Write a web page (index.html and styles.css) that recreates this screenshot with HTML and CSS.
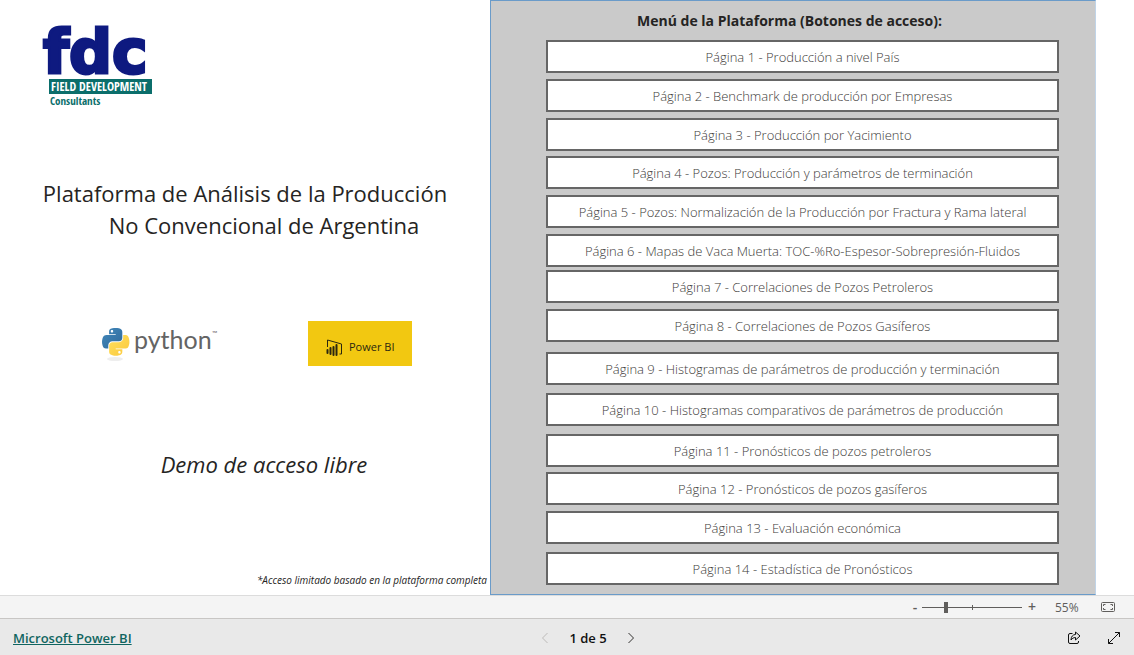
FILE: index.html
```html
<!DOCTYPE html>
<html lang="es">
<head>
<meta charset="utf-8">
<title>Plataforma de Análisis de la Producción No Convencional de Argentina</title>
<link rel="stylesheet" href="styles.css">
</head>
<body>
<main class="report">
  <section class="cover">
    <svg class="logo-fdc" viewBox="0 0 120 84" role="img" aria-label="fdc Field Development Consultants">
      <text class="fdc-name" x="3" y="48">fdc</text>
      <rect x="9" y="54" width="103" height="15" fill="#0b6e6b"/>
      <text class="fdc-field" x="11" y="66">FIELD DEVELOPMENT</text>
      <text class="fdc-cons" x="10" y="80">Consultants</text>
    </svg>
    <h1 class="title"><span class="title-first">Plataforma de Análisis de la Producción</span><span class="title-second">No Convencional de Argentina</span></h1>
    <div class="tools">
      <svg class="logo-python" viewBox="0 0 120 44" role="img" aria-label="python">
        <defs>
          <linearGradient id="blue" x1="0" y1="0" x2="1" y2="1"><stop offset="0" stop-color="#4289bd"/><stop offset="1" stop-color="#30699a"/></linearGradient>
          <linearGradient id="yellow" x1="0" y1="0" x2="1" y2="1"><stop offset="0" stop-color="#ffe060"/><stop offset="1" stop-color="#fbc83a"/></linearGradient>
        </defs>
        <ellipse cx="15" cy="37" rx="8" ry="2" fill="#eeeeee"/>
        <g transform="translate(2 6) scale(.247)">
          <path fill="url(#blue)" d="M54.9 0c-4.6 0-9 .4-12.8 1.1C30.800 3.100 28.700 7.300 28.700 15v10.200h26.800v3.400H18.700c-7.800 0-14.600 4.700-16.700 13.600-2.500 10.200-2.600 16.600 0 27.200 1.900 7.900 6.400 13.600 14.200 13.600h9.200V70.800c0-8.900 7.700-16.700 16.700-16.700h26.700c7.400 0 13.400-6.100 13.400-13.600V15c0-7.300-6.100-12.700-13.400-13.900C64.200.3 59.500 0 54.900 0zM40.400 8.200c2.800 0 5 2.300 5 5.100s-2.200 5.100-5 5.100-5-2.300-5-5.100 2.300-5.100 5-5.100z"/>
          <path fill="url(#yellow)" d="M85.600 28.700v11.900c0 9.200-7.800 17-16.700 17H42.200c-7.300 0-13.400 6.300-13.400 13.600v25.500c0 7.300 6.300 11.500 13.400 13.600 8.500 2.500 16.600 3 26.700 0 6.700-2 13.400-5.900 13.400-13.600V86.500H55.500v-3.400h40.100c7.800 0 10.700-5.400 13.400-13.600 2.800-8.400 2.700-16.500 0-27.200-1.900-7.700-5.600-13.600-13.400-13.600zM70.600 93.300c2.800 0 5 2.300 5 5.100s-2.200 5.100-5 5.100-5-2.300-5-5.100 2.200-5.100 5-5.100z"/>
        </g>
        <text class="python-name" x="34" y="27">python</text>
        <text class="python-tm" x="112" y="14">™</text>
      </svg>
      <div class="powerbi">
        <svg class="powerbi-icon" viewBox="0 0 18 18" aria-hidden="true">
          <path d="M1.500 9V2l14 4v10h-2" fill="none" stroke="#2b2710" stroke-linejoin="round"/>
          <path d="M1.500 12v3M4.500 10v6M7.500 9v8M10.500 7v10" fill="none" stroke="#2b2710" stroke-width="2" stroke-linecap="round"/>
        </svg>
        <span>Power BI</span>
      </div>
    </div>
    <p class="demo">Demo de acceso libre</p>
    <p class="note">*Acceso limitado basado en la plataforma completa</p>
  </section>
  <nav class="menu" aria-labelledby="menu-title">
    <h2 class="menu-title" id="menu-title">Menú de la Plataforma (Botones de acceso):</h2>
    <button class="page-btn">Página 1 - Producción a nivel País</button>
    <button class="page-btn">Página 2 - Benchmark de producción por Empresas</button>
    <button class="page-btn gap-small">Página 3 - Producción por Yacimiento</button>
    <button class="page-btn">Página 4 - Pozos: Producción y parámetros de terminación</button>
    <button class="page-btn">Página 5 - Pozos: Normalización de la Producción por Fractura y Rama lateral</button>
    <button class="page-btn gap-tiny">Página 6 - Mapas de Vaca Muerta: TOC-%Ro-Espesor-Sobrepresión-Fluidos</button>
    <button class="page-btn">Página 7 - Correlaciones de Pozos Petroleros</button>
    <button class="page-btn gap-wide">Página 8 - Correlaciones de Pozos Gasíferos</button>
    <button class="page-btn gap-large">Página 9 - Histogramas de parámetros de producción y terminación</button>
    <button class="page-btn gap-large">Página 10 - Histogramas comparativos de parámetros de producción</button>
    <button class="page-btn gap-small">Página 11 - Pronósticos de pozos petroleros</button>
    <button class="page-btn">Página 12 - Pronósticos de pozos gasíferos</button>
    <button class="page-btn gap-large">Página 13 - Evaluación económica</button>
    <button class="page-btn gap-large">Página 14 - Estadística de Pronósticos</button>
  </nav>
</main>
<div class="zoombar">
  <button class="zoom-step" aria-label="Alejar">-</button>
  <input class="zoom-range" type="range" min="0" max="100" value="23" aria-label="Zoom">
  <button class="zoom-step" aria-label="Acercar">+</button>
  <span class="zoom-value">55%</span>
  <button class="icon-btn" aria-label="Ajustar a la página">
    <svg width="14" height="10" viewBox="0 0 14 10" fill="none" stroke="#605e5c"><rect x=".5" y=".5" width="13" height="9" rx="1"/><path d="M2.500 4V2.500H4.500M9.500 2.500h2V4M11.500 6v1.500h-2M4.500 7.500h-2V6"/></svg>
  </button>
</div>
<footer class="footer">
  <a class="brand" href="#">Microsoft Power BI</a>
  <div class="pager">
    <button class="icon-btn" aria-label="Página anterior" disabled><svg width="8" height="12" viewBox="0 0 8 12" fill="none" stroke="#bdbbb9"><path d="M6.500 1l-5 5 5 5"/></svg></button>
    <span>1 de 5</span>
    <button class="icon-btn" aria-label="Página siguiente"><svg width="8" height="12" viewBox="0 0 8 12" fill="none" stroke="#323130"><path d="M1.500 1l5 5-5 5"/></svg></button>
  </div>
  <div class="actions">
    <button class="icon-btn" aria-label="Compartir"><svg width="14" height="14" viewBox="0 0 14 14" fill="none" stroke="#111" stroke-linejoin="round"><path d="M5.500 2.500H3a1.500 1.500 0 0 0-1.500 1.500v7A1.500 1.500 0 0 0 3 12.500h7a1.500 1.500 0 0 0 1.500-1.500v-1"/><path d="M8.500 1l4.500 4-4.500 4V6.500C6.500 6.500 5 7.500 4 9c0-3.500 2-5.500 4.500-5.500z"/></svg></button>
    <button class="icon-btn" aria-label="Pantalla completa"><svg width="14" height="14" viewBox="0 0 14 14" fill="none" stroke="#111"><path d="M1.500 12.500l11-11M8 1.500h4.500V6M1.500 8v4.500H6"/></svg></button>
  </div>
</footer>
</body>
</html>
```
FILE: styles.css
```css
* {
  box-sizing: border-box;
}

body {
  margin: 0;
  min-height: 100vh;
  display: flex;
  flex-direction: column;
  background: #fff;
  color: #252423;
  font-family: "Open Sans", "Noto Sans", sans-serif;
}

button {
  font: inherit;
  color: inherit;
}

.report {
  flex: 1;
  display: grid;
  grid-template-columns: 490fr 606fr 38fr;
}

.cover {
  display: flex;
  flex-direction: column;
  padding-top: 25px;
}

.logo-fdc {
  width: 120px;
  height: 84px;
  margin-left: 40px;
  overflow: visible;
}

.fdc-name {
  font: bold 60px "DejaVu Sans", sans-serif;
  fill: #0e1a80;
  stroke: #0e1a80;
  stroke-width: 3px;
}

.fdc-field {
  font: bold 12px "Liberation Sans Narrow", "Open Sans Condensed", sans-serif;
  fill: #fff;
}

.fdc-cons {
  font: bold 11px "Liberation Sans Narrow", "Open Sans Condensed", sans-serif;
  fill: #0b6e6b;
}

.title {
  display: flex;
  flex-direction: column;
  margin: 68px 0 0;
  font-size: 22px;
  line-height: 32px;
  font-weight: 400;
  text-align: center;
  white-space: nowrap;
}

.title-second {
  padding-left: 38px;
}

.tools {
  display: flex;
  align-items: center;
  gap: 88px;
  margin: 80px 0 0 100px;
}

.logo-python {
  width: 120px;
  height: 44px;
}

.python-name {
  font: 25px Lato, sans-serif;
  fill: #646464;
}

.python-tm {
  font: 7px Lato, sans-serif;
  fill: #646464;
}

.powerbi {
  display: flex;
  align-items: center;
  gap: 5px;
  width: 104px;
  height: 45px;
  padding: 6px 0 0 18px;
  background: #f2c811;
  color: #2b2710;
  font-size: 11px;
  font-weight: 500;
  white-space: nowrap;
}

.powerbi-icon {
  width: 18px;
  height: 18px;
}

.demo {
  margin: 82px 0 0 38px;
  font-size: 22px;
  line-height: 32px;
  font-style: italic;
  text-align: center;
}

.note {
  margin: auto 3px 8px 0;
  font-size: 10px;
  line-height: 14px;
  font-style: italic;
  text-align: right;
}

.menu {
  display: flex;
  flex-direction: column;
  padding: 0 36px 0 55px;
  background: #cacaca;
  border: 1px solid #6a9bc9;
  border-right-color: #c0d4e8;
}

.menu-title {
  margin: 9px 26px 9px 0;
  font-size: 14px;
  line-height: 21px;
  font-weight: 700;
  text-align: center;
}

.page-btn {
  height: 33px;
  margin: 0 0 6px;
  padding: 0;
  border: 2px solid #666;
  background: #fff;
  color: #3d3b39;
  font-size: 13px;
  font-weight: 300;
}

.gap-tiny {
  margin-bottom: 3px;
}

.gap-small {
  margin-bottom: 5px;
}

.gap-large {
  margin-bottom: 8px;
}

.gap-wide {
  margin-bottom: 10px;
}

.zoombar {
  display: flex;
  align-items: center;
  justify-content: flex-end;
  height: 24px;
  padding-right: 19px;
  border-top: 1px solid #dcdcdc;
  border-bottom: 1px solid #c8c6c4;
  background: #f4f4f4;
  color: #605e5c;
  font-size: 12px;
}

.zoom-step {
  width: 14px;
  padding: 0;
  border: 0;
  background: none;
  font-size: 14px;
  font-weight: 600;
  line-height: 20px;
}

.zoom-range {
  appearance: none;
  width: 100px;
  height: 12px;
  margin: 0 3px 0 0;
  background:
    linear-gradient(#605e5c, #605e5c) center / 1px 5px no-repeat,
    linear-gradient(#605e5c, #605e5c) center / 100% 1px no-repeat;
}

.zoom-range::-webkit-slider-thumb {
  appearance: none;
  width: 4px;
  height: 11px;
  background: #605e5c;
}

.zoom-value {
  width: 24px;
  margin: 0 22px 0 16px;
}

.icon-btn {
  display: flex;
  padding: 0;
  border: 0;
  background: none;
}

.footer {
  display: grid;
  grid-template-columns: 1fr auto 1fr;
  align-items: center;
  height: 36px;
  padding: 2px 13px 0;
  background: #e9e9e9;
  color: #111;
  font-size: 13px;
  font-weight: 600;
}

.brand {
  justify-self: start;
  color: #106560;
}

.pager {
  display: flex;
  align-items: center;
  gap: 20px;
  margin-right: -42px;
}

.actions {
  display: flex;
  justify-content: flex-end;
  gap: 26px;
}
```
